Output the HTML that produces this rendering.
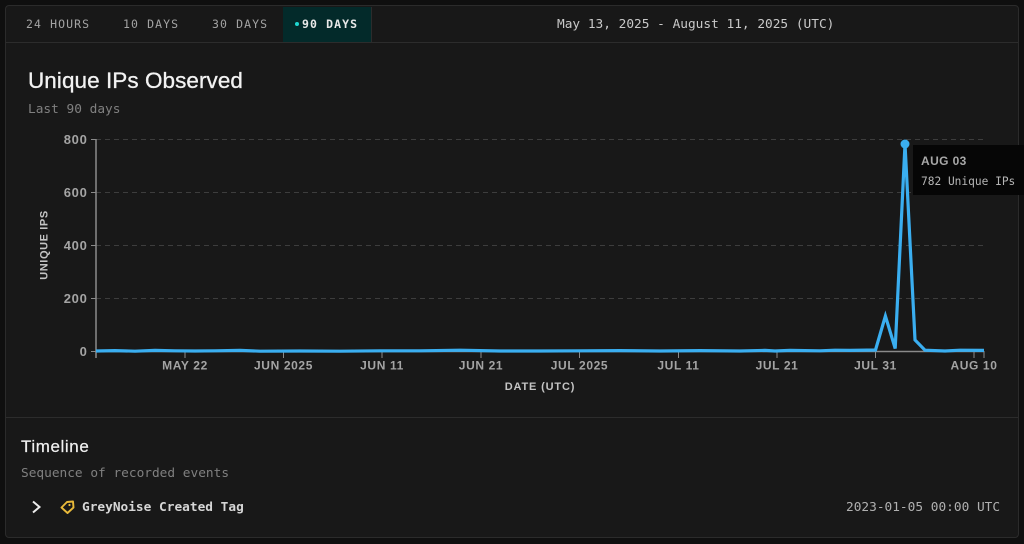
<!DOCTYPE html>
<html lang="en">
<head>
<meta charset="utf-8">
<title>Unique IPs Observed</title>
<style>
html,body{margin:0;padding:0;background:#0f0f0f;}
body{position:relative;width:1024px;height:544px;overflow:hidden;font-family:"DejaVu Sans Mono","Liberation Mono",monospace;}
.card{position:absolute;left:5px;top:5px;width:1014px;height:533px;box-sizing:border-box;background:#181818;border:1px solid #2b2b2b;border-radius:4px;}
.a{position:absolute;white-space:nowrap;line-height:1;}
.tab{font-size:11.5px;letter-spacing:1.1px;color:#a3a3a3;top:19px;}
.line{position:absolute;height:1px;background:#2c2c2c;}
.mono13{font-size:12.8px;}
svg{position:absolute;left:0;top:0;}
</style>
</head>
<body>
<div class="card"></div>
<div class="line" style="left:6px;top:42px;width:1012px;"></div>
<div class="line" style="left:6px;top:417px;width:1012px;"></div>

<div class="a" style="left:283px;top:7px;width:88px;height:35px;background:#032a2a;"></div>
<div class="a" style="left:371px;top:7px;width:1px;height:35px;background:#2c2c2c;"></div>
<div class="a tab" style="left:26px;">24 HOURS</div>
<div class="a tab" style="left:123px;">10 DAYS</div>
<div class="a tab" style="left:212px;">30 DAYS</div>
<div class="a" style="left:295px;top:22px;width:4px;height:4px;border-radius:50%;background:#1fd6d0;"></div>
<div class="a tab" style="left:302px;color:#e8e8e8;font-weight:bold;">90 DAYS</div>
<div class="a mono13" style="left:557px;top:19px;color:#c9c9c9;">May 13, 2025 - August 11, 2025 (UTC)</div>

<div class="a" style="left:28px;top:70px;font-family:'Liberation Sans',sans-serif;font-size:22.5px;color:#f2f2f2;letter-spacing:.06px;-webkit-text-stroke:.3px #f2f2f2;">Unique IPs Observed</div>
<div class="a mono13" style="left:28px;top:104px;color:#808080;">Last 90 days</div>

<svg width="1024" height="544" viewBox="0 0 1024 544" font-family="'Liberation Sans',sans-serif">
  <g stroke="#3d3d3d" stroke-width="1" stroke-dasharray="5 4" fill="none">
    <line x1="96" x2="984" y1="139.5" y2="139.5"/>
    <line x1="96" x2="984" y1="192.5" y2="192.5"/>
    <line x1="96" x2="984" y1="245.5" y2="245.5"/>
    <line x1="96" x2="984" y1="298.5" y2="298.5"/>
  </g>
  <g stroke="#8a8a8a" stroke-width="1" fill="none">
    <line x1="91" x2="96" y1="139.5" y2="139.5"/>
    <line x1="91" x2="96" y1="192.5" y2="192.5"/>
    <line x1="91" x2="96" y1="245.5" y2="245.5"/>
    <line x1="91" x2="96" y1="298.5" y2="298.5"/>
    <line x1="91" x2="96" y1="351.5" y2="351.5"/>
    <line x1="185" x2="185" y1="351" y2="358"/>
    <line x1="283.5" x2="283.5" y1="351" y2="358"/>
    <line x1="382" x2="382" y1="351" y2="358"/>
    <line x1="481" x2="481" y1="351" y2="358"/>
    <line x1="579.5" x2="579.5" y1="351" y2="358"/>
    <line x1="678.5" x2="678.5" y1="351" y2="358"/>
    <line x1="777" x2="777" y1="351" y2="358"/>
    <line x1="875.5" x2="875.5" y1="351" y2="358"/>
    <line x1="974" x2="974" y1="351" y2="358"/>
    <line x1="984" x2="984" y1="351" y2="358"/>
    <line x1="96" x2="984" y1="351.5" y2="351.5" stroke-width="1.5"/>
    <line x1="96" x2="96" y1="139" y2="358" stroke-width="1.5"/>
  </g>
  <g fill="#a4a4a4" font-size="13" font-weight="bold" text-anchor="end" stroke="none" letter-spacing=".7">
    <text x="87.5" y="144">800</text>
    <text x="87.5" y="197">600</text>
    <text x="87.5" y="250">400</text>
    <text x="87.5" y="303">200</text>
    <text x="87.5" y="356">0</text>
  </g>
  <g fill="#a4a4a4" font-size="12" font-weight="bold" text-anchor="middle" letter-spacing=".62">
    <text x="185" y="369.5">MAY 22</text>
    <text x="283.5" y="369.5">JUN 2025</text>
    <text x="382" y="369.5">JUN 11</text>
    <text x="481" y="369.5">JUN 21</text>
    <text x="579.5" y="369.5">JUL 2025</text>
    <text x="678.5" y="369.5">JUL 11</text>
    <text x="777" y="369.5">JUL 21</text>
    <text x="875.5" y="369.5">JUL 31</text>
    <text x="974" y="369.5">AUG 10</text>
  </g>
  <text x="540" y="390" fill="#c4c4c4" font-size="11" font-weight="bold" text-anchor="middle" letter-spacing=".85">DATE (UTC)</text>
  <text transform="translate(47.5 245) rotate(-90)" fill="#c4c4c4" font-size="11" font-weight="bold" text-anchor="middle" letter-spacing=".6">UNIQUE IPS</text>

  <polyline fill="none" stroke="#3aaef0" stroke-width="3.2" stroke-linejoin="miter" points="96,351 115,350.6 135,351.2 155,350.4 175,350.8 195,351 215,350.8 240,350.4 260,351.2 300,351 340,351.2 380,350.8 420,350.8 460,350.2 500,351 540,351 580,350.8 620,350.6 660,351 700,350.6 740,351 765,350.4 775,351 790,350.4 820,350.8 835,350.2 850,350.4 875.5,350 885.4,316 895.2,348.5 905,144 915,340 925,350.2 945,351 960,350.2 984,350.4"/>
  <circle cx="905" cy="144" r="4.5" fill="#3aaef0"/>

  <path d="M33 501.5 L39.5 507 L33 512.5" fill="none" stroke="#ededed" stroke-width="2"/>
  <path d="M61.5 507.5 L67 502 L73 501.5 L73.5 507.5 L67.5 513 Z" fill="none" stroke="#e8b93a" stroke-width="1.9" stroke-linejoin="round"/>
  <circle cx="69.5" cy="505" r="1.1" fill="#e8b93a"/>
</svg>

<div class="a" style="left:913px;top:145px;width:111px;height:50px;background:#060606;"></div>
<div class="a" style="left:921px;top:155px;font-family:'Liberation Sans',sans-serif;font-size:12px;font-weight:bold;color:#a8a8a8;letter-spacing:.4px;">AUG 03</div>
<div class="a" style="left:921px;top:176px;font-size:11.2px;color:#b5b5b5;">782 Unique IPs</div>

<div class="a" style="left:21px;top:438px;font-family:'Liberation Sans',sans-serif;font-size:17px;color:#f0f0f0;letter-spacing:.6px;-webkit-text-stroke:.2px #f0f0f0;">Timeline</div>
<div class="a mono13" style="left:21px;top:468px;color:#808080;">Sequence of recorded events</div>
<div class="a mono13" style="left:82px;top:502px;color:#d6d6d6;font-weight:bold;">GreyNoise Created Tag</div>
<div class="a mono13" style="left:846px;top:502px;color:#b0b0b0;">2023-01-05 00:00 UTC</div>
</body>
</html>
